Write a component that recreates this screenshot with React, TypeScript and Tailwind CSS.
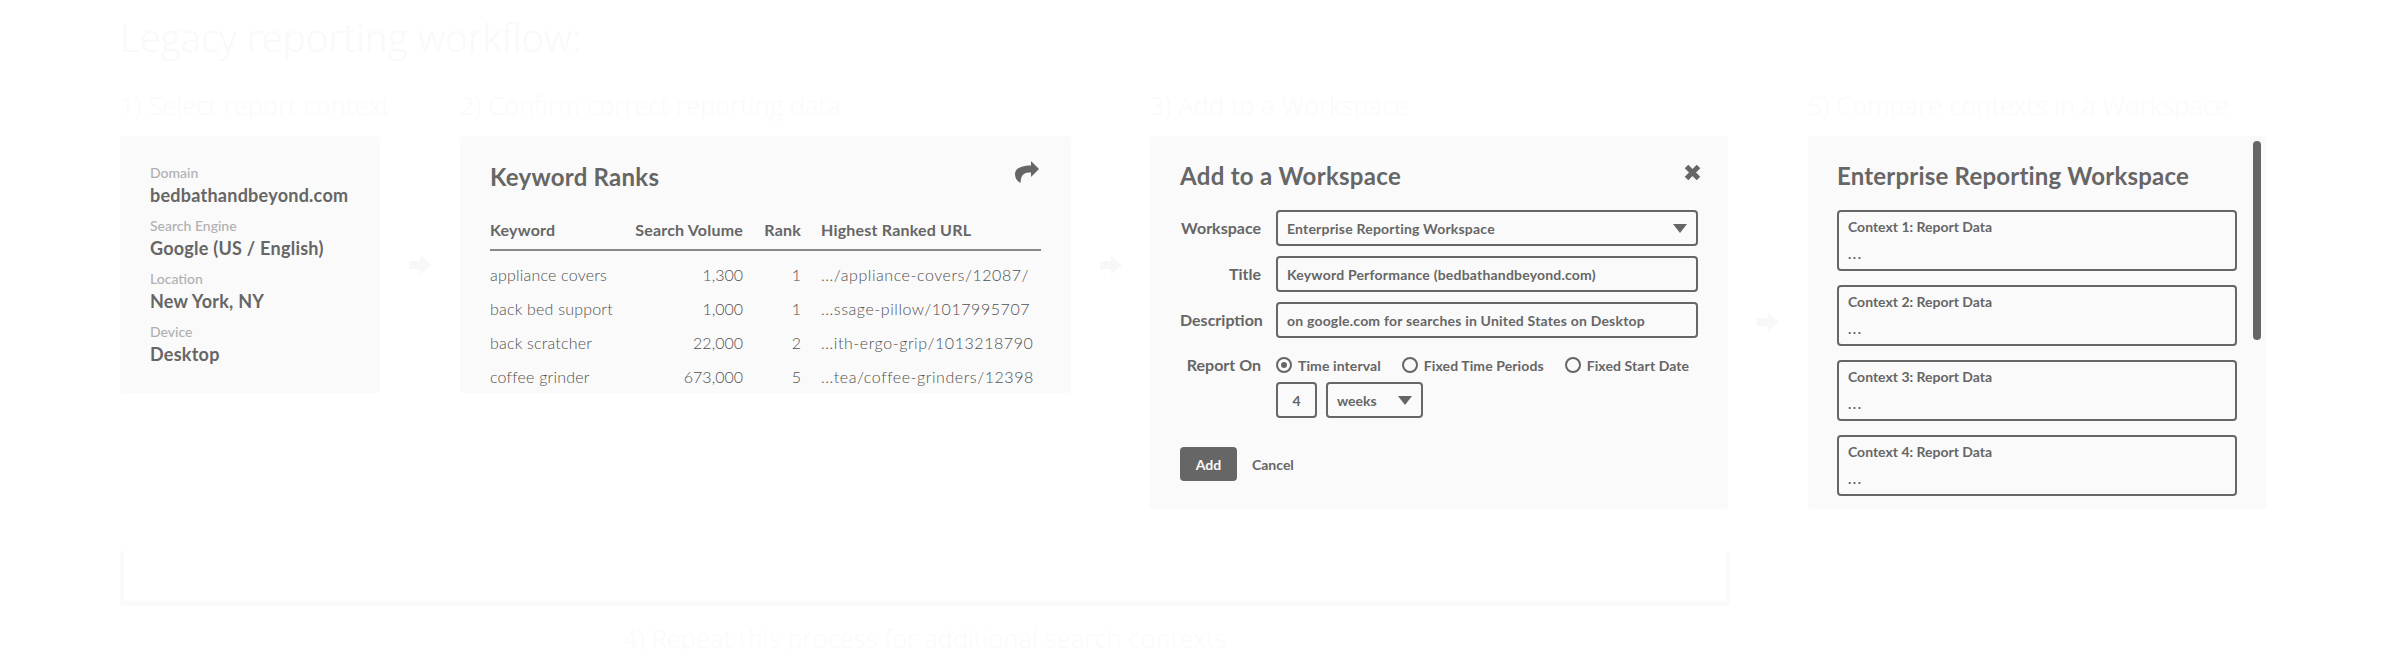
import React from "react";

const contextRows = [
  ["Domain", "bedbathandbeyond.com"],
  ["Search Engine", "Google (US / English)"],
  ["Location", "New York, NY"],
  ["Device", "Desktop"],
];

const keywordRows = [
  ["appliance covers", "1,300", "1", ".../appliance-covers/12087/"],
  ["back bed support", "1,000", "1", "...ssage-pillow/1017995707"],
  ["back scratcher", "22,000", "2", "...ith-ergo-grip/1013218790"],
  ["coffee grinder", "673,000", "5", "...tea/coffee-grinders/12398"],
];

function StepTitle({ children }: { children: React.ReactNode }) {
  return (
    <h2 className="font-['Open_Sans',sans-serif] text-[25px] leading-[32px] font-light tracking-[0.3px] whitespace-nowrap text-[#fafafa]">
      {children}
    </h2>
  );
}

function Arrow() {
  return (
    <svg viewBox="0 0 22 20" className="h-5 w-[22px] fill-[#f8f8f8]">
      <path d="M11 0l11 10-11 10v-6H0V6h11z" />
    </svg>
  );
}

function Caret() {
  return (
    <svg viewBox="0 0 14 9" className="h-[9px] w-[14px] fill-[#666]">
      <path d="M0 0h14L7 9z" />
    </svg>
  );
}

function Radio({ label, on }: { label: string; on?: boolean }) {
  return (
    <div className="flex items-center gap-[6px]">
      <div className="flex h-4 w-4 items-center justify-center rounded-full border-2 border-[#666]">
        {on && <div className="h-[6px] w-[6px] rounded-full bg-[#666]" />}
      </div>
      <span>{label}</span>
    </div>
  );
}

function Field({ label, children }: { label: string; children: React.ReactNode }) {
  return (
    <div className="flex items-center gap-[15px]">
      <div className="w-[81px] text-right text-[16px] font-bold">{label}</div>
      <div className="flex h-9 w-[422px] items-center justify-between rounded border-2 border-[#666] px-[9px] text-[14px] font-bold tracking-[0.2px]">
        {children}
      </div>
    </div>
  );
}

export default function App() {
  return (
    <div className="h-[650px] w-[2386px] overflow-hidden bg-white pl-[120px] font-['Lato',sans-serif] text-[#666]">
      <h1 className="pt-[14px] font-['Open_Sans',sans-serif] text-[38px] leading-[46px] font-light tracking-[0.2px] text-[#f9f9f9]">
        Legacy reporting workflow:
      </h1>

      <div className="mt-[29px] flex items-start">
        <div className="w-[260px]">
          <StepTitle>1) Select report context</StepTitle>
          <div className="mt-[15px] flex h-[257px] flex-col gap-[9px] rounded bg-[#fafafa] pt-[28px] pl-[30px]">
            {contextRows.map(([label, value]) => (
              <div key={label}>
                <div className="text-[14px] leading-[18px] font-medium text-[#b0b0b0]">{label}</div>
                <div className="text-[18px] leading-[26px] font-bold tracking-[0.25px]">{value}</div>
              </div>
            ))}
          </div>
        </div>

        <div className="flex h-[186px] w-[80px] items-end justify-center">
          <Arrow />
        </div>

        <div className="w-[611px]">
          <StepTitle>2) Confirm correct reporting data</StepTitle>
          <div className="mt-[15px] h-[257px] overflow-hidden rounded bg-[#fafafa] px-[30px]">
            <div className="flex items-start justify-between pt-[25px]">
              <div className="text-[24px] leading-8 font-bold tracking-[0.25px]">Keyword Ranks</div>
              <svg viewBox="0 0 24 22" className="mr-[2px] h-[22px] w-6 fill-[#666]">
                <path d="M16 0l8 8-8 8v-4.5c-6 0-10 1-10.5 10.5C2 20 0 17 0 13 0 7 7 4.5 16 4.5z" />
              </svg>
            </div>
            <table className="mt-[18px] w-full border-collapse text-[16px]">
              <thead>
                <tr className="h-[39px] border-b-2 border-[#888] text-left font-bold tracking-[0.2px]">
                  <th className="w-[145px]">Keyword</th>
                  <th className="w-[108px] text-right">Search Volume</th>
                  <th className="w-[58px] text-right">Rank</th>
                  <th className="pl-5">Highest Ranked URL</th>
                </tr>
              </thead>
              <tbody className="font-light text-[#505050]">
                <tr className="h-2" />
                {keywordRows.map((row) => (
                  <tr key={row[0]} className="h-[34px]">
                    <td className="tracking-[0.2px]">{row[0]}</td>
                    <td className="text-right">{row[1]}</td>
                    <td className="text-right">{row[2]}</td>
                    <td className="pl-5 tracking-[0.55px] whitespace-nowrap">{row[3]}</td>
                  </tr>
                ))}
              </tbody>
            </table>
          </div>
        </div>

        <div className="flex h-[186px] w-[79px] items-end justify-center">
          <Arrow />
        </div>

        <div className="w-[578px]">
          <StepTitle>3) Add to a Workspace</StepTitle>
          <div className="relative mt-[15px] h-[373px] rounded bg-[#fafafa] px-[30px] pt-6">
            <div className="text-[24px] leading-8 font-bold tracking-[0.3px]">Add to a Workspace</div>
            <svg viewBox="0 0 17 17" className="absolute top-7 right-[27px] h-[17px] w-[17px] fill-none stroke-[#666] stroke-[5]">
              <path d="M2.5 2.5l12 12M14.5 2.5l-12 12" />
            </svg>
            <div className="mt-[18px] flex flex-col gap-[10px]">
              <Field label="Workspace">
                <span>Enterprise Reporting Workspace</span>
                <Caret />
              </Field>
              <Field label="Title">
                <span>Keyword Performance (bedbathandbeyond.com)</span>
              </Field>
              <Field label="Description">
                <span>on google.com for searches in United States on Desktop</span>
              </Field>
            </div>
            <div className="mt-[17px] flex items-start gap-[15px]">
              <div className="w-[81px] text-right text-[16px] leading-5 font-bold">Report On</div>
              <div>
                <div className="flex h-5 items-center gap-[21px] text-[14px] font-bold tracking-[0.1px]">
                  <Radio label="Time interval" on />
                  <Radio label="Fixed Time Periods" />
                  <Radio label="Fixed Start Date" />
                </div>
                <div className="mt-[7px] flex gap-[9px] text-[14px] font-bold">
                  <div className="flex h-9 w-[41px] items-center justify-center rounded border-2 border-[#666]">4</div>
                  <div className="flex h-9 w-[97px] items-center justify-between rounded border-2 border-[#666] px-[9px]">
                    <span>weeks</span>
                    <Caret />
                  </div>
                </div>
              </div>
            </div>
            <div className="mt-[29px] flex items-center gap-[15px] text-[14px] font-bold">
              <div className="flex h-[34px] w-[57px] items-center justify-center rounded bg-[#666] text-[#fafafa]">Add</div>
              <span>Cancel</span>
            </div>
          </div>
        </div>

        <div className="flex h-[243px] w-[80px] items-end justify-center">
          <Arrow />
        </div>

        <div className="w-[458px]">
          <StepTitle>5) Compare contexts in a Workspace</StepTitle>
          <div className="relative mt-[15px] h-[373px] overflow-hidden rounded bg-[#fafafa] pt-6 pl-[29px]">
            <div className="text-[24px] leading-8 font-bold tracking-[0.2px]">Enterprise Reporting Workspace</div>
            <div className="absolute top-[5px] right-[5px] h-[199px] w-2 rounded bg-[#666]" />
            <div className="mt-[18px] flex flex-col gap-[14px]">
              {[1, 2, 3, 4].map((n) => (
                <div key={n} className="h-[61px] w-[400px] rounded border-2 border-[#666] px-[9px] pt-[6px] text-[14px] font-bold">
                  <div className="leading-[18px]">Context {n}: Report Data</div>
                  <div className="mt-[9px] leading-[18px] tracking-[1.5px]">...</div>
                </div>
              ))}
            </div>
          </div>
        </div>
      </div>

      <div className="mt-[42px] flex w-[1610px] flex-col items-center">
        <div className="h-[55px] w-full border-x-4 border-b-[5px] border-[#fafafa]" />
        <div className="mt-5 font-['Open_Sans',sans-serif] text-[25px] leading-6 font-light tracking-[0.3px] whitespace-nowrap text-[#fafafa]">
          4) Repeat this process for additional search contexts
        </div>
      </div>
    </div>
  );
}
